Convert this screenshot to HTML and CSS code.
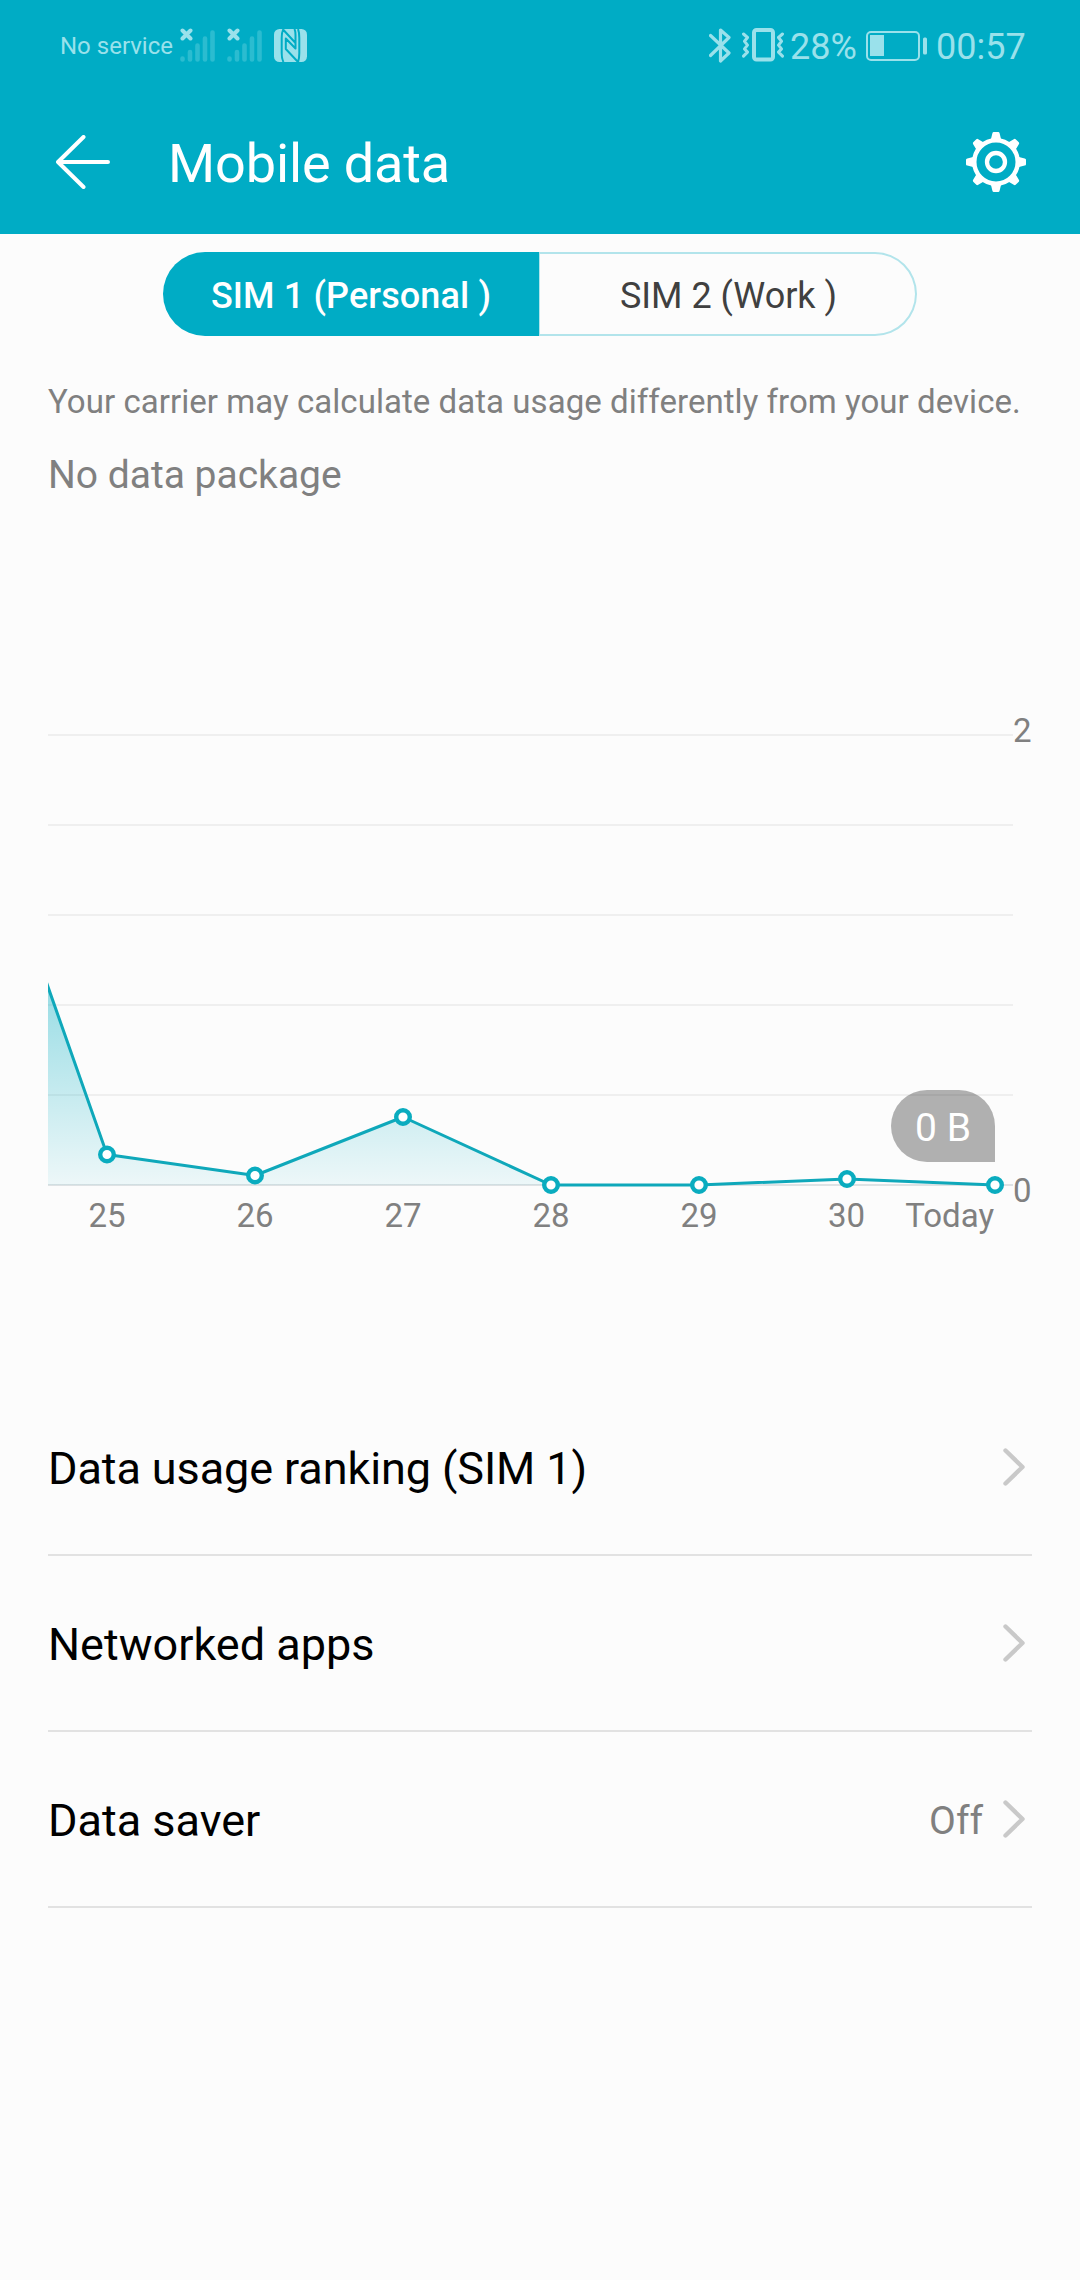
FILE: index.html
```html
<!DOCTYPE html>
<html lang="en">
<head>
<meta charset="utf-8">
<title>Mobile data</title>
<link rel="stylesheet" href="styles.css">
</head>
<body>
<header class="header">
  <div class="status">
    <div class="status-left">
      <span class="carrier">No service</span>
      <svg class="signal" width="36" height="36" viewBox="0 0 36 36">
        <path class="cross" d="M2.500 3.500l8 8M10.500 3.500l-8 8"/>
        <path class="bars" d="M2.500 31.500v1M10 25v7.500M17.500 18.500v14M25 11.500v21M32.500 5.500v27"/>
      </svg>
      <svg class="signal" width="36" height="36" viewBox="0 0 36 36">
        <path class="cross" d="M2.500 3.500l8 8M10.500 3.500l-8 8"/>
        <path class="bars" d="M2.500 31.500v1M10 25v7.500M17.500 18.500v14M25 11.500v21M32.500 5.500v27"/>
      </svg>
      <svg class="nfc" width="33" height="33" viewBox="0 0 33 33">
        <rect width="33" height="33" rx="5.500"/>
        <path d="M9.500 0Q7.700 3 7.700 9V24Q7.700 30 9.500 33M9.500 1L21.500 14V6Q21.500 2.500 20.500 0M24 0Q25.300 3 25.300 9V24Q25.300 30 24 33L11.800 20V9.500L21.500 19.500V13"/>
      </svg>
    </div>
    <div class="status-right">
      <svg class="bluetooth" width="22" height="35" viewBox="0 0 22 35">
        <path d="M1.500 7.500L20 25L11.500 33V2L20 9.500L1.500 27.500"/>
      </svg>
      <svg class="vibrate" width="42" height="34" viewBox="0 0 42 34">
        <rect x="12" y="2" width="19" height="29.500" rx="2.500"/>
        <path d="M1.500 6l4 3.500l-3 3.800l3 3.800l-3 3.800l3 3.200l-4 4M40.500 6l-4 3.500l3 3.800l-3 3.800l3 3.800l-3 3.200l4 4"/>
      </svg>
      <span class="percent">28%</span>
      <svg class="battery" width="62" height="30" viewBox="0 0 62 30">
        <rect x="1" y="1" width="52" height="28" rx="4"/>
        <path d="M4 4h14v21h-14zM57 8q0-1.500 1.500-1.500h1q1.500 0 1.500 1.500v14q0 1.500-1.500 1.500h-1q-1.500 0-1.500-1.500z" class="charge"/>
      </svg>
      <time class="clock">00:57</time>
    </div>
  </div>
  <div class="toolbar">
    <svg class="back" width="54" height="54" viewBox="0 0 54 54"><path d="M27.500 2L2 27L27.500 52M2 27H52"/></svg>
    <h1 class="title">Mobile data</h1>
    <svg class="gear" width="60" height="60" viewBox="-30 -30 60 60">
      <defs><path id="tooth" d="M-5.500-21L-3.600-28.700Q-3.300-30-2.200-30H2.200Q3.300-30 3.600-28.700L5.500-21Z"/></defs>
      <g class="teeth">
        <use href="#tooth"/><use href="#tooth" transform="rotate(45)"/><use href="#tooth" transform="rotate(90)"/><use href="#tooth" transform="rotate(135)"/>
        <use href="#tooth" transform="rotate(180)"/><use href="#tooth" transform="rotate(225)"/><use href="#tooth" transform="rotate(270)"/><use href="#tooth" transform="rotate(315)"/>
      </g>
      <circle r="21.700" stroke-width="4.400"/><circle r="9" stroke-width="4.300"/>
    </svg>
  </div>
</header>

<main class="content">
  <nav class="tabs">
    <button class="tab tab-active">SIM 1 (Personal )</button>
    <button class="tab">SIM 2 (Work )</button>
  </nav>
  <p class="note">Your carrier may calculate data usage differently from your device.</p>
  <p class="package">No data package</p>

  <svg class="chart" width="1080" height="550" viewBox="0 700 1080 550">
    <defs>
      <linearGradient id="area" gradientUnits="userSpaceOnUse" x1="0" y1="985" x2="0" y2="1185">
        <stop offset="0" stop-color="#00acc1" stop-opacity=".4"/>
        <stop offset="1" stop-color="#00acc1" stop-opacity=".06"/>
      </linearGradient>
      <clipPath id="plot"><rect x="48" y="700" width="1000" height="550"/></clipPath>
    </defs>
    <path class="grid" d="M48 735H1013M48 825H1013M48 915H1013M48 1005H1013M48 1095H1013"/>
    <path class="axis" d="M48 1185H1013"/>
    <path fill="url(#area)" d="M48 986L107 1154.500L255 1175.500L403 1117L551 1185H48Z"/>
    <path class="line" clip-path="url(#plot)" d="M44 975.500L107 1154.500L255 1175.500L403 1117L551 1185H699L847 1179L995 1185"/>
    <g class="dots">
      <circle cx="107" cy="1154.500" r="6.800"/><circle cx="255" cy="1175.500" r="6.800"/><circle cx="403" cy="1117" r="6.800"/><circle cx="551" cy="1185" r="6.800"/>
      <circle cx="699" cy="1185" r="6.800"/><circle cx="847" cy="1179" r="6.800"/><circle cx="995" cy="1185" r="6.800"/>
    </g>
    <g class="labels">
      <text x="107" y="1227">25</text><text x="255" y="1227">26</text><text x="403" y="1227">27</text><text x="551" y="1227">28</text>
      <text x="699" y="1227">29</text><text x="846.500" y="1227">30</text><text x="994" y="1227" class="end">Today</text>
      <text x="1013" y="742" class="start">2</text><text x="1013" y="1202" class="start">0</text>
    </g>
    <path class="bubble" d="M927 1090H959A36 36 0 0 1 995 1126V1162H927A36 36 0 0 1 927 1090Z"/>
    <text class="bubble-text" x="943" y="1141">0 B</text>
  </svg>

  <ul class="list">
    <li class="row"><span class="row-title row-title-long">Data usage ranking (SIM 1)</span><svg class="chevron" width="22" height="38" viewBox="0 0 22 38"><path d="M2.500 2.500L19.500 19L2.500 35.500"/></svg></li>
    <li class="row"><span class="row-title">Networked apps</span><svg class="chevron" width="22" height="38" viewBox="0 0 22 38"><path d="M2.500 2.500L19.500 19L2.500 35.500"/></svg></li>
    <li class="row"><span class="row-title">Data saver</span><span class="value">Off</span><svg class="chevron" width="22" height="38" viewBox="0 0 22 38"><path d="M2.500 2.500L19.500 19L2.500 35.500"/></svg></li>
  </ul>
</main>
</body>
</html>
```
FILE: styles.css
```css
* { box-sizing: border-box; }
body { margin: 0; min-height: 2280px; background: #fcfcfc; font-family: Roboto, sans-serif; }
svg { display: block; flex: none; fill: none; stroke-linecap: round; stroke-linejoin: round; }

.header { height: 234px; background: #00acc5; }
.status { height: 90px; padding: 0 53px 0 60px; display: flex; justify-content: space-between; align-items: center; color: #9ae1eb; white-space: nowrap; }
.status-left, .status-right { display: flex; align-items: center; }
.carrier { width: 120px; padding-top: 2px; font-size: 24px; line-height: 28px; }
.signal { margin-right: 11px; }
.cross { stroke: #9ae1eb; stroke-width: 4; }
.bars { stroke: #2bbcd0; stroke-width: 4.600; }
.nfc { margin: 1px 0 0; }
.nfc rect { fill: #9ae1eb; }
.nfc path { stroke: #00acc5; stroke-width: 2; stroke-linecap: butt; }
.bluetooth { margin-right: 11px; }
.bluetooth path { stroke: #9ae1eb; stroke-width: 3.200; }
.vibrate { margin-right: 6px; }
.vibrate rect { stroke: #9ae1eb; stroke-width: 4; }
.vibrate path { stroke: #9ae1eb; stroke-width: 3; }
.percent, .clock { font-size: 36px; line-height: 42px; padding-top: 3px; }
.percent { width: 76px; }
.battery { margin: 1px 8px 0 0; }
.battery rect { stroke: #9ae1eb; stroke-width: 2; }
.charge { fill: #9ae1eb; }
.clock { width: 91px; }

.toolbar { height: 144px; padding: 0 54px 0 56px; display: flex; align-items: center; }
.back path { stroke: #fff; stroke-width: 4; }
.title { flex: 1; margin: 4px 0 0 58px; font-size: 54px; font-weight: 400; line-height: 64px; letter-spacing: -.12px; color: #fff; }
.gear circle { stroke: #fff; }
.teeth { fill: #fff; }

.content { padding-top: 18px; }
.tabs { width: 754px; height: 84px; margin: 0 auto; display: flex; }
.tab { flex: 0 0 378px; padding: 4px 0 0 2px; border: 2px solid #b2e4eb; border-left-width: 1px; border-radius: 0 42px 42px 0; background: none; color: #404040; font: 400 36px/42px Roboto, sans-serif; }
.tab-active { flex-basis: 376px; padding-left: 0; border: 0; border-radius: 42px 0 0 42px; background: #00acc5; color: #fff; font-weight: 500; letter-spacing: .12px; }
.note { margin: 46px 48px 0; font-size: 33px; line-height: 40px; letter-spacing: .05px; color: #808080; white-space: nowrap; }
.package { margin: 30px 48px 0; font-size: 39px; line-height: 46px; color: #808080; }

.chart { margin-top: 202px; }
.grid { stroke: #efefef; stroke-width: 2; stroke-linecap: butt; }
.axis { stroke: #dee2e4; stroke-width: 2; stroke-linecap: butt; }
.line { stroke: #0fa8ba; stroke-width: 3; }
.dots circle { fill: #fff; stroke: #0aacbf; stroke-width: 4.400; }
.labels text { fill: #808080; font-size: 33px; text-anchor: middle; }
.labels .end { text-anchor: end; }
.labels .start { text-anchor: start; }
.bubble { fill: #000; fill-opacity: .3; }
.bubble-text { fill: #fff; font-size: 39px; text-anchor: middle; }

.list { margin: 130px 48px 0; padding: 0; list-style: none; }
.row { height: 176px; padding-right: 7px; border-bottom: 2px solid #e2e2e2; display: flex; align-items: center; }
.row-title { flex: 1; padding-top: 4px; font-size: 45px; line-height: 54px; color: #000; }
.row-title-long { letter-spacing: -.1px; }
.value { margin-right: 20px; font-size: 39px; line-height: 46px; padding-top: 4px; color: #808080; }
.chevron path { stroke: #c9c9c9; stroke-width: 4.400; }
```
